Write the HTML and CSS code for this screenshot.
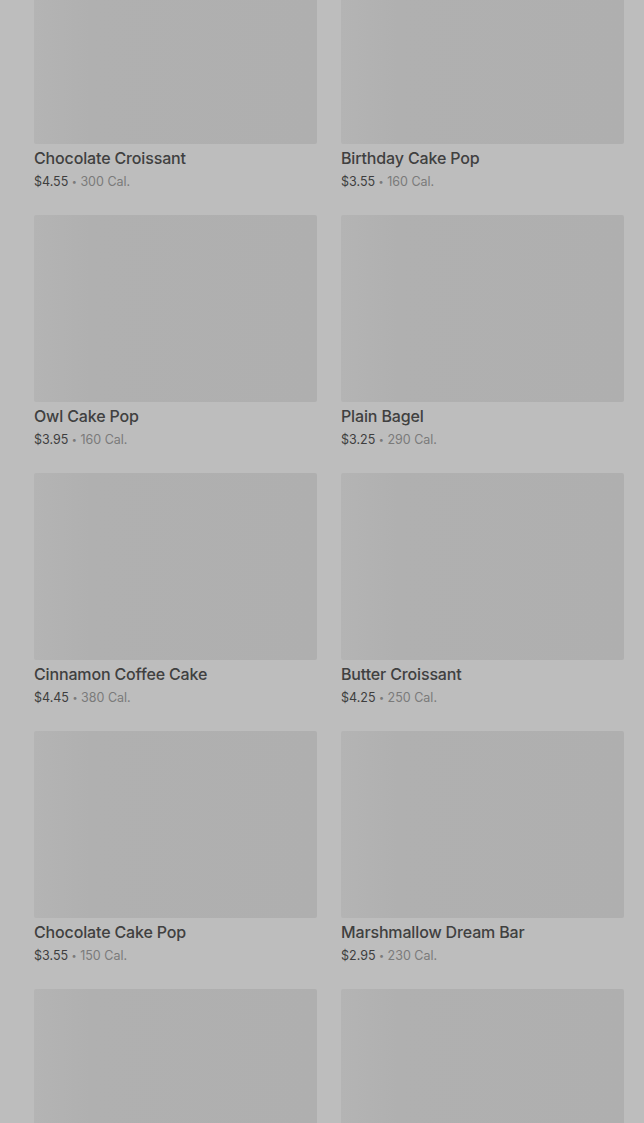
FILE: index.html
```html
<!DOCTYPE html>
<html lang="en">
<head>
    <meta charset="UTF-8">
    <meta name="viewport" content="width=device-width, initial-scale=1.0">
    <title>Bakery</title>
    <link rel="stylesheet" href="styles.css">
</head>
<body>
    <main class="menu-grid">
        <div class="product">
            <div class="product-image"></div>
            <h3 class="product-name">Chocolate Croissant</h3>
            <p class="product-meta"><span class="price">$4.55</span> <span class="dot">•</span> 300 Cal.</p>
        </div>
        <div class="product">
            <div class="product-image"></div>
            <h3 class="product-name">Birthday Cake Pop</h3>
            <p class="product-meta"><span class="price">$3.55</span> <span class="dot">•</span> 160 Cal.</p>
        </div>
        <div class="product">
            <div class="product-image"></div>
            <h3 class="product-name">Owl Cake Pop</h3>
            <p class="product-meta"><span class="price">$3.95</span> <span class="dot">•</span> 160 Cal.</p>
        </div>
        <div class="product">
            <div class="product-image"></div>
            <h3 class="product-name">Plain Bagel</h3>
            <p class="product-meta"><span class="price">$3.25</span> <span class="dot">•</span> 290 Cal.</p>
        </div>
        <div class="product">
            <div class="product-image"></div>
            <h3 class="product-name">Cinnamon Coffee Cake</h3>
            <p class="product-meta"><span class="price">$4.45</span> <span class="dot">•</span> 380 Cal.</p>
        </div>
        <div class="product">
            <div class="product-image"></div>
            <h3 class="product-name">Butter Croissant</h3>
            <p class="product-meta"><span class="price">$4.25</span> <span class="dot">•</span> 250 Cal.</p>
        </div>
        <div class="product">
            <div class="product-image"></div>
            <h3 class="product-name">Chocolate Cake Pop</h3>
            <p class="product-meta"><span class="price">$3.55</span> <span class="dot">•</span> 150 Cal.</p>
        </div>
        <div class="product">
            <div class="product-image"></div>
            <h3 class="product-name">Marshmallow Dream Bar</h3>
            <p class="product-meta"><span class="price">$2.95</span> <span class="dot">•</span> 230 Cal.</p>
        </div>
        <div class="product">
            <div class="product-image"></div>
        </div>
        <div class="product">
            <div class="product-image"></div>
        </div>
    </main>
</body>
</html>
```

FILE: styles.css
```css
body {
    font-family: 'Inter', 'Noto Sans', sans-serif;
    background-color: #bdbdbd;
    margin: 0;
    padding: 0;
    overflow: hidden;
}

.menu-grid {
    display: grid;
    grid-template-columns: 283px 283px;
    column-gap: 24px;
    row-gap: 24px;
    padding-left: 34px;
    margin-top: -43px;
}

.product-image {
    height: 187px;
    border-radius: 2px;
    background: linear-gradient(90deg, #b4b4b4 0%, #b0b0b0 20%, #afafaf 100%);
}

.product-name {
    margin: 4px 0 0;
    font-size: 16px;
    line-height: 20px;
    font-weight: 500;
    letter-spacing: -0.15px;
    color: #404040;
}

.product-meta {
    margin: 5px 0 0;
    font-size: 12.5px;
    line-height: 18px;
    color: #7a7a7a;
}

.price {
    color: #3e3e3e;
}

.dot {
    font-size: 9px;
    vertical-align: 1px;
}
```
